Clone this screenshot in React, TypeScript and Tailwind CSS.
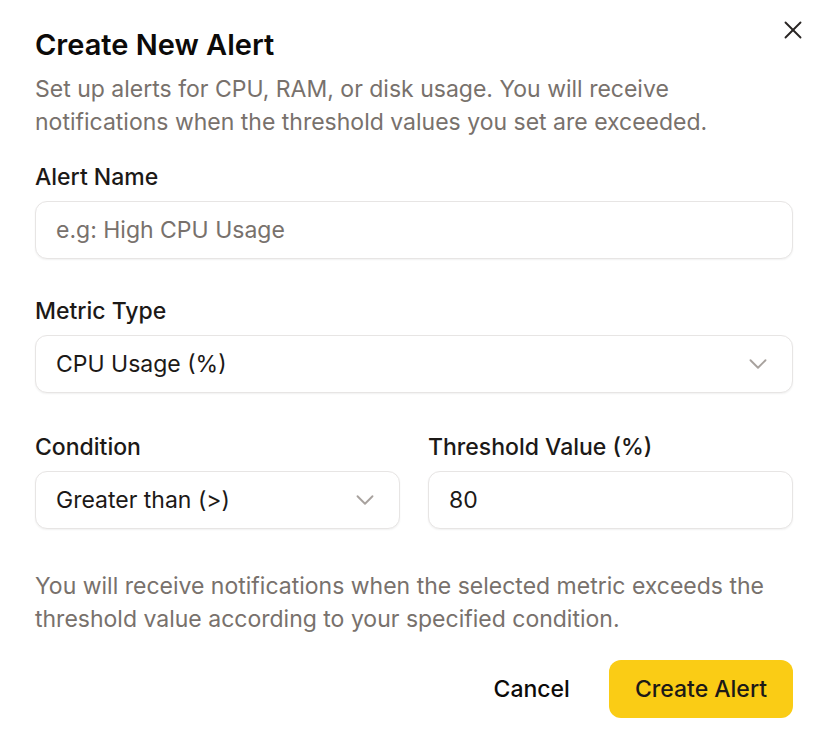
import { X, ChevronDown } from "lucide-react";

const FIELD =
	"flex h-[58px] w-full items-center rounded-[12px] border border-[#e7e5e4] bg-white px-[20px] text-[23px] shadow-[0_1px_2px_rgba(0,0,0,0.06)]";

function Label({ children }: { children: React.ReactNode }) {
	return <label className="block text-[23px] leading-[30px] font-medium text-[#1c1917]">{children}</label>;
}

function SelectBox({ value }: { value: string }) {
	return (
		<div className={`${FIELD} justify-between text-[#1c1917]`}>
			<span>{value}</span>
			<ChevronDown size={30} strokeWidth={1.5} className="-mr-[1px] text-[#a8a29e]" />
		</div>
	);
}

export default function App() {
	return (
		<div
			className="relative h-[756px] w-[828px] bg-white px-[35px] pt-[28px]"
			style={{ fontFamily: "Inter, 'Noto Sans', sans-serif" }}
		>
			<button className="absolute top-[15px] right-[20px] text-[#292524]">
				<X size={30} strokeWidth={1.5} />
			</button>

			<h2 className="text-[29px] leading-[34px] font-semibold text-[#0c0a09]">Create New Alert</h2>
			<p className="mt-[11px] text-[23px] leading-[33px] text-[#78716c]">
				Set up alerts for CPU, RAM, or disk usage. You will receive notifications when the threshold values you set
				are exceeded.
			</p>

			<div className="mt-[23px]">
				<Label>Alert Name</Label>
				<input
					type="text"
					placeholder="e.g: High CPU Usage"
					className={`${FIELD} mt-[9px] text-[#1c1917] outline-none placeholder:text-[#78716c]`}
				/>
			</div>

			<div className="mt-[37px]">
				<Label>Metric Type</Label>
				<div className="mt-[9px]">
					<SelectBox value="CPU Usage (%)" />
				</div>
			</div>

			<div className="mt-[39px] grid grid-cols-2 gap-[28px]">
				<div>
					<Label>Condition</Label>
					<div className="mt-[9px]">
						<SelectBox value="Greater than (>)" />
					</div>
				</div>
				<div>
					<Label>Threshold Value (%)</Label>
					<input
						type="text"
						defaultValue="80"
						className={`${FIELD} mt-[9px] text-[#1c1917] outline-none`}
					/>
				</div>
			</div>

			<p className="mt-[41px] text-[23px] leading-[33px] text-[#78716c]">
				You will receive notifications when the selected metric exceeds the threshold value according to your
				specified condition.
			</p>

			<div className="mt-[24px] flex items-center justify-end gap-[15px]">
				<button className="h-[58px] px-[24px] text-[23px] font-medium text-[#0c0a09]">Cancel</button>
				<button className="h-[58px] rounded-[12px] bg-[#facc15] px-[26px] text-[23px] font-medium text-[#1c1917]">
					Create Alert
				</button>
			</div>
		</div>
	);
}
